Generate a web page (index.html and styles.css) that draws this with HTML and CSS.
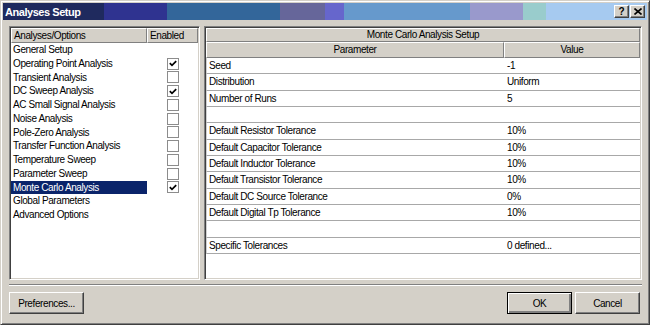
FILE: index.html
```html
<!DOCTYPE html>
<html lang="en">
<head>
    <meta charset="UTF-8">
    <title>Analyses Setup</title>
    <link rel="stylesheet" href="styles.css">
</head>
<body>
    <div class="window">
        <!-- Barra de titulo -->
        <div class="titlebar">
            <span class="title">Analyses Setup</span>
            <div class="title-buttons">
                <span class="tbtn help">?</span>
                <span class="tbtn close">
                    <svg width="8" height="7" viewBox="0 0 8 7"><path d="M0.5 0.5 L7.5 6.5 M7.5 0.5 L0.5 6.5" stroke="#000" stroke-width="1.6"/></svg>
                </span>
            </div>
        </div>

        <div class="content">
            <div class="panels">
                <!-- Lista de analisis -->
                <div class="panel list-panel">
                    <div class="list-head">
                        <div class="hcell name-col">Analyses/Options</div>
                        <div class="hcell check-col">Enabled</div>
                    </div>
                    <div class="list-rows" id="listRows"></div>
                </div>

                <!-- Tabla de parametros -->
                <div class="panel grid-panel">
                    <div class="hcell grid-title">Monte Carlo Analysis Setup</div>
                    <div class="grid-head">
                        <div class="hcell param-col">Parameter</div>
                        <div class="hcell value-col">Value</div>
                    </div>
                    <div class="grid-rows" id="gridRows"></div>
                </div>
            </div>

            <div class="separator"></div>

            <div class="buttons">
                <button class="btn prefs">Preferences...</button>
                <div class="right-buttons">
                    <button class="btn ok">OK</button>
                    <button class="btn cancel">Cancel</button>
                </div>
            </div>
        </div>
    </div>

    <script>
        const analyses = [
            ['General Setup', null],
            ['Operating Point Analysis', true],
            ['Transient Analysis', false],
            ['DC Sweep Analysis', true],
            ['AC Small Signal Analysis', false],
            ['Noise Analysis', false],
            ['Pole-Zero Analysis', false],
            ['Transfer Function Analysis', false],
            ['Temperature Sweep', false],
            ['Parameter Sweep', false],
            ['Monte Carlo Analysis', true, 'selected'],
            ['Global Parameters', null],
            ['Advanced Options', null]
        ];

        const params = [
            ['Seed', '-1'],
            ['Distribution', 'Uniform'],
            ['Number of Runs', '5'],
            ['', ''],
            ['Default Resistor Tolerance', '10%'],
            ['Default Capacitor Tolerance', '10%'],
            ['Default Inductor Tolerance', '10%'],
            ['Default Transistor Tolerance', '10%'],
            ['Default DC Source Tolerance', '0%'],
            ['Default Digital Tp Tolerance', '10%'],
            ['', ''],
            ['Specific Tolerances', '0 defined...']
        ];

        const tick = '<svg width="8" height="7" viewBox="0 0 8 7"><path d="M0.8 3.2 L3 5.4 L7.2 1.2" fill="none" stroke="#000" stroke-width="1.7"/></svg>';

        let html = '';
        analyses.forEach(a => {
            let box = '';
            if (a[1] !== null) {
                box = `<span class="checkbox">${a[1] ? tick : ''}</span>`;
            }
            html += `<div class="list-row">
                        <div class="name-col ${a[2] || ''}">${a[0]}</div>
                        <div class="check-col">${box}</div>
                     </div>`;
        });
        document.getElementById('listRows').innerHTML = html;

        html = '';
        params.forEach(p => {
            html += `<div class="grid-row">
                        <div class="param-col">${p[0]}</div>
                        <div class="value-col">${p[1]}</div>
                     </div>`;
        });
        document.getElementById('gridRows').innerHTML = html;
    </script>
</body>
</html>
```

FILE: styles.css
```css
* {
    box-sizing: border-box;
}
body {
    margin: 0;
    width: 650px;
    height: 325px;
    background-color: #d4d0c8;
    font-family: 'Liberation Sans', Arial, sans-serif;
    font-size: 10px;
    letter-spacing: -0.4px;
    color: #000;
    overflow: hidden;
}

/* Ventana */
.window {
    width: 650px;
    height: 325px;
    border: 1px solid;
    border-color: #d4d0c8 #404040 #404040 #d4d0c8;
    box-shadow: inset 1px 1px 0 #fff, inset -1px -1px 0 #808080;
    padding: 2px;
    display: flex;
    flex-direction: column;
}
.titlebar {
    height: 17px;
    flex: none;
    display: flex;
    align-items: center;
    justify-content: space-between;
    padding: 0 2px 0 2px;
    background: linear-gradient(90deg,
        #1f2a5e 0, #1f2a5e 101px,
        #2f3390 101px, #2f3390 164px,
        #33669a 164px, #33669a 277px,
        #66669a 277px, #66669a 322px,
        #6666cc 322px, #6666cc 341px,
        #6699cc 341px, #6699cc 467px,
        #9999cc 467px, #9999cc 520px,
        #99cccc 520px, #99cccc 543px,
        #a6caf0 543px);
}
.title {
    color: #fff;
    font-weight: bold;
    font-size: 11px;
    letter-spacing: -0.45px;
}
.title-buttons {
    display: flex;
    gap: 1px;
}
.tbtn {
    width: 15px;
    height: 13px;
    display: flex;
    align-items: center;
    justify-content: center;
    background-color: #d4d0c8;
    border: 1px solid;
    border-color: #fff #404040 #404040 #fff;
    box-shadow: inset -1px -1px 0 #808080;
    font-weight: bold;
    font-size: 10px;
    letter-spacing: 0;
}

.content {
    flex: 1;
    display: flex;
    flex-direction: column;
    padding: 6px 5px 0 6px;
}
.panels {
    height: 254px;
    display: flex;
    gap: 4px;
}
.panel {
    background-color: #fff;
    border: 1px solid;
    border-color: #808080 #fff #fff #808080;
    box-shadow: inset 1px 1px 0 #404040, inset -1px -1px 0 #d4d0c8;
    padding: 1px;
}
.hcell {
    background-color: #d4d0c8;
    border: 1px solid;
    border-color: #fff #808080 #808080 #fff;
    white-space: nowrap;
}

/* Lista de analisis */
.list-panel {
    width: 191px;
}
.list-head {
    display: flex;
    height: 15px;
}
.list-head .hcell {
    padding: 1px 0 0 2px;
}
.name-col {
    width: 136px;
}
.check-col {
    flex: 1;
}
.list-row {
    display: flex;
    height: 13.75px;
    line-height: 13.75px;
}
.list-row .name-col {
    padding-left: 2px;
}
.list-row .check-col {
    display: flex;
    align-items: center;
    justify-content: center;
}
.selected {
    background-color: #0a246a;
    color: #fff;
}
.checkbox {
    width: 12px;
    height: 12px;
    border: 1px solid #8c8c8c;
    background-color: #fff;
    display: flex;
    align-items: center;
    justify-content: center;
}

/* Tabla de parametros */
.grid-panel {
    flex: 1;
}
.grid-title {
    height: 14px;
    text-align: center;
    line-height: 12px;
}
.grid-head {
    display: flex;
    height: 16px;
}
.grid-head .hcell {
    text-align: center;
    line-height: 14px;
}
.param-col {
    width: 298px;
}
.value-col {
    flex: 1;
}
.grid-row {
    display: flex;
    height: 16.33px;
    line-height: 15px;
    border-bottom: 1px solid #a8a8a8;
    border-left: 1px solid #d0d0d0;
}
.grid-row .param-col {
    padding-left: 2px;
}
.grid-row .value-col {
    padding-left: 2px;
}

/* Botones */
.separator {
    margin-top: 4px;
    height: 2px;
    border-top: 1px solid #808080;
    border-bottom: 1px solid #fff;
}
.buttons {
    margin-top: 6px;
    display: flex;
    justify-content: space-between;
    padding-right: 2px;
}
.right-buttons {
    display: flex;
    gap: 3px;
}
.btn {
    height: 22px;
    font-family: 'Liberation Sans', Arial, sans-serif;
    font-size: 10px;
    letter-spacing: -0.4px;
    background-color: #d4d0c8;
    border: 1px solid;
    border-color: #fff #404040 #404040 #fff;
    box-shadow: inset -1px -1px 0 #808080;
    padding: 0;
    color: #000;
}
.prefs {
    width: 75px;
}
.ok {
    width: 65px;
    border: 1px solid #000;
    box-shadow: inset 1px 1px 0 #fff, inset -2px -2px 0 #808080;
}
.cancel {
    width: 65px;
}
```
